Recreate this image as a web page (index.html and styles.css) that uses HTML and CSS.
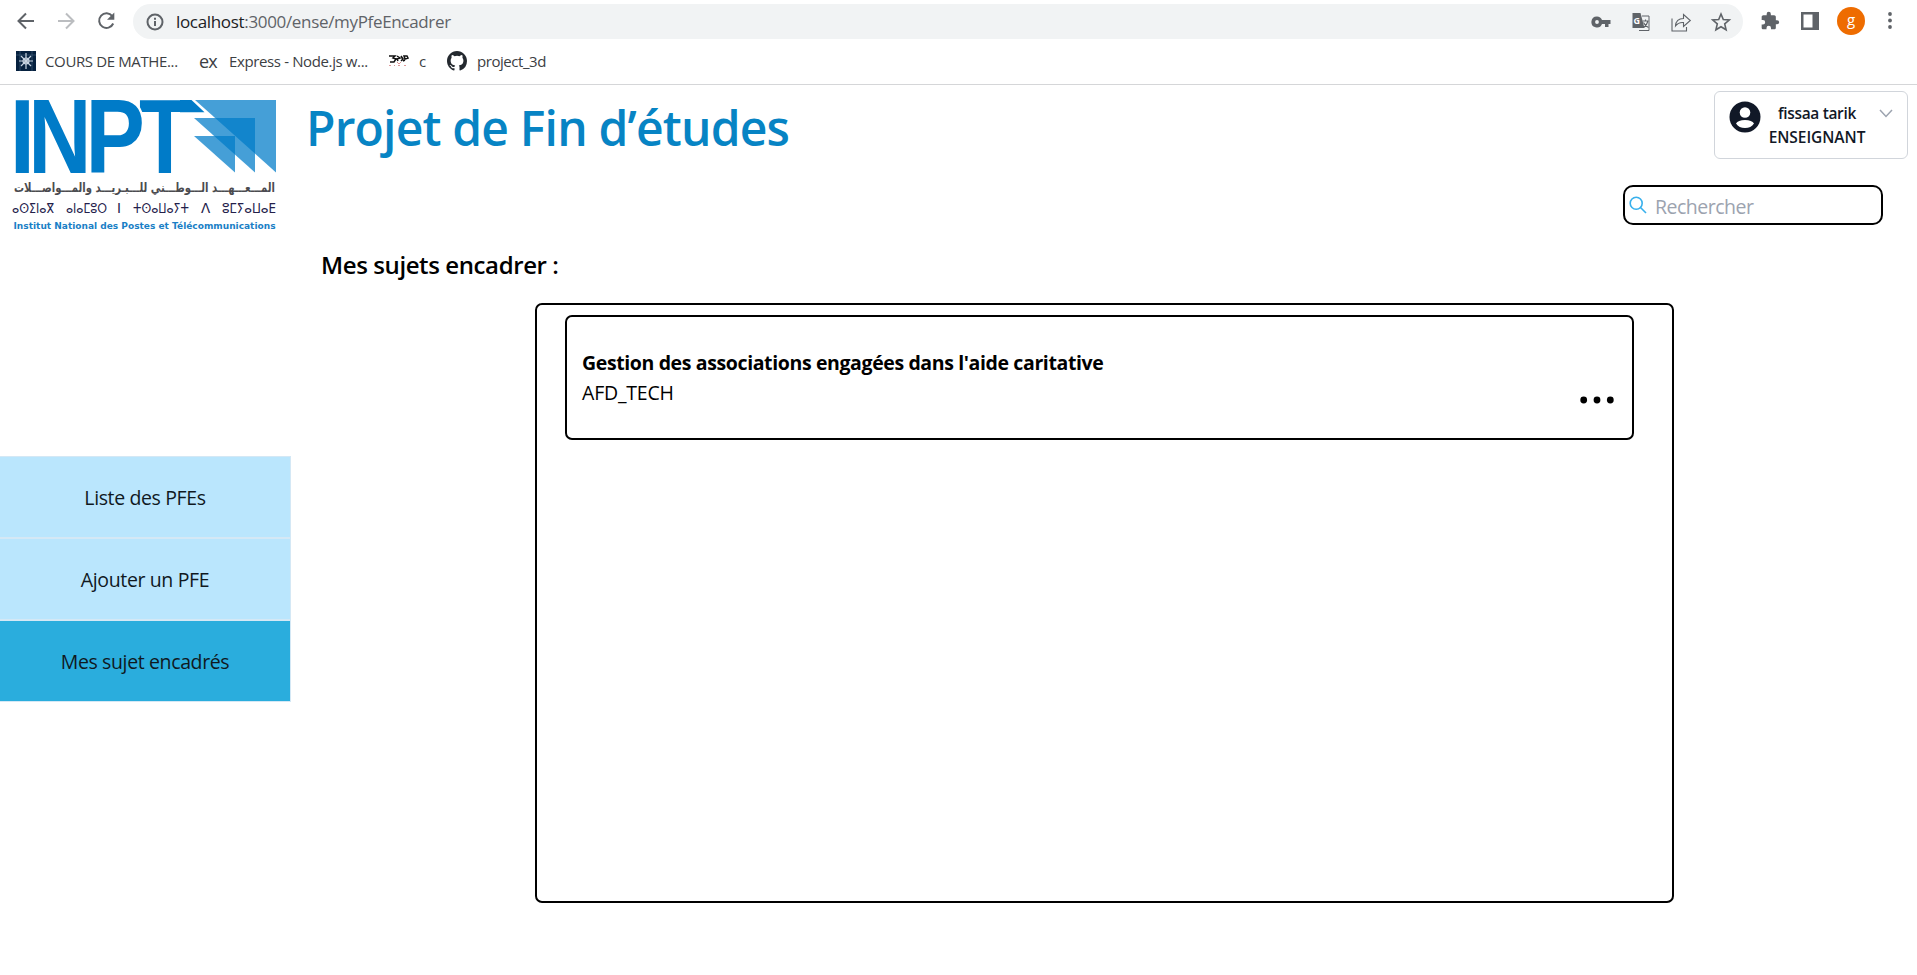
FILE: index.html
```html
<!DOCTYPE html>
<html lang="fr">
<head>
<meta charset="utf-8">
<title>Projet de Fin d’études</title>
<link rel="stylesheet" href="styles.css">
</head>
<body>
<header class="browser">
  <div class="toolbar">
    <div class="nav">
      <svg width="20" height="20" viewBox="0 0 20 20"><path d="M18 10H3M10 2.500L2.500 10l7.500 7.500"/></svg>
      <svg class="dim" width="20" height="20" viewBox="0 0 20 20"><path d="M2 10h15M10 2.500L17.500 10 10 17.500"/></svg>
      <svg width="20" height="20" viewBox="0 0 20 20"><path d="M16.300 5.200A7.300 7.300 0 1 0 17.200 12.500"/><path class="solid" d="M18.300 1.500v7.300H11z"/></svg>
    </div>
    <div class="address">
      <svg class="info" width="18" height="18" viewBox="0 0 18 18"><circle cx="9" cy="9" r="7.500"/><path d="M9 8v5M9 4.700v2"/></svg>
      <span class="url"><span class="host">localhost</span>:3000/ense/myPfeEncadrer</span>
      <div class="actions">
        <svg width="20" height="20" viewBox="0 0 20 20"><path class="solid" fill-rule="evenodd" d="M6 4.500a5.500 5.500 0 1 0 5 7.500h3v3h3.500v-3H19.500V8H11A5.500 5.500 0 0 0 6 4.500zm0 3.600a1.900 1.900 0 1 1 0 3.800 1.900 1.900 0 0 1 0-3.800z"/></svg>
        <svg width="20" height="20" viewBox="0 0 20 20"><path d="M11 4h7v14.500H8" stroke-width="1"/><path class="solid" d="M1.500 1h8l4 15h-12z"/><text class="gt" x="2.500" y="11.500">G</text><path class="thin" d="M11.500 9h6M14.500 7.500V9M17 9q-1 4-4.500 6.500M12.500 10.500q1.500 3.500 5 5"/></svg>
        <svg width="20" height="20" viewBox="0 0 20 20"><path class="thin" d="M1 6.500V19h14.500v-4M4.500 14Q5 6.500 12.500 6.500V2.500L19.300 8.500l-6.800 6V10.500Q7.500 10 4.500 14z"/></svg>
        <svg width="20" height="20" viewBox="0 0 20 20"><path class="star" d="M10 2l2.300 5.500 6 .500-4.600 3.900 1.400 5.900L10 14.700l-5.100 3.100 1.400-5.900L1.700 8l6-.5z"/></svg>
      </div>
    </div>
    <div class="tools">
      <svg width="20" height="20" viewBox="0 0 24 24"><path class="solid" d="M20.500 11H19V7c0-1.100-.9-2-2-2h-4V3.500a2.500 2.500 0 0 0-5 0V5H4c-1.100 0-2 .9-2 2v3.800h1.500a2.700 2.700 0 0 1 0 5.400H2V20c0 1.100.9 2 2 2h3.800v-1.500a2.700 2.700 0 0 1 5.400 0V22H17c1.100 0 2-.9 2-2v-4h1.500a2.500 2.500 0 0 0 0-5z"/></svg>
      <svg width="18" height="18" viewBox="0 0 18 18"><path class="solid" fill-rule="evenodd" d="M0 0h18v18H0zM2.500 2.500v13h9v-13z"/></svg>
      <span class="avatar">g</span>
      <svg width="6" height="18" viewBox="0 0 6 18"><g class="solid"><circle cx="3" cy="2" r="1.900"/><circle cx="3" cy="8.500" r="1.900"/><circle cx="3" cy="15" r="1.900"/></g></svg>
    </div>
  </div>
  <nav class="bookmarks">
    <a class="bm1"><svg width="20" height="20" viewBox="0 0 20 20"><path fill="#06213f" stroke="none" d="M0 0h20v20H0z"/><path class="grid" d="M0 4h20M4 0v20M16 0v20"/><path class="flake" d="M10 2v16M3 10h14M5 5l10 10M15 5L5 15"/><circle class="flake" cx="10" cy="10" r="3"/></svg><span>COURS DE MATHE...</span></a>
    <a class="bm2"><span class="ex">ex</span><span>Express - Node.js w...</span></a>
    <a class="bm3"><svg class="cow" width="20" height="14" viewBox="0 0 20 14"><path class="ink" d="M0 2h6L4 4l3 1-2 3H1M8 2l3 2-3 1 1 2M12 2l2 3-2 2M15 2h3l1 2-3 1zM14 7l2-1"/><path class="pink" d="M8 8l2 2 2-2M0 11.500h2M5 11.500h1M9 11.500h2M15 11.500h2"/></svg><span>c</span></a>
    <a class="bm4"><svg width="20" height="20" viewBox="0 0 16 16"><path fill="#24292f" stroke="none" d="M8 0C3.580 0 0 3.580 0 8c0 3.540 2.290 6.530 5.470 7.590.4.070.55-.17.55-.38 0-.19-.01-.82-.01-1.490-2.010.37-2.530-.49-2.690-.94-.09-.23-.48-.94-.82-1.130-.28-.15-.68-.52-.01-.53.63-.01 1.080.58 1.230.82.72 1.210 1.870.87 2.330.66.07-.52.28-.87.51-1.070-1.780-.2-3.640-.89-3.640-3.950 0-.87.31-1.590.82-2.150-.08-.2-.36-1.020.08-2.120 0 0 .67-.21 2.200.82a7.600 7.600 0 0 1 4 0c1.530-1.040 2.200-.82 2.200-.82.44 1.100.16 1.920.08 2.120.51.56.82 1.270.82 2.150 0 3.070-1.870 3.750-3.650 3.950.29.25.54.73.54 1.480 0 1.070-.01 1.930-.01 2.200 0 .21.15.46.55.38A8 8 0 0 0 16 8c0-4.420-3.580-8-8-8z"/></svg><span>project_3d</span></a>
  </nav>
</header>
<div class="app">
  <aside class="side">
    <svg class="logo" width="290" height="160" viewBox="0 85 290 160">
      <g class="letters">
        <text transform="translate(139.100 173) scale(.8 1)">T</text>
        <path d="M180 100h11.500l13 12.300H180z"/>
        <text class="cut" transform="translate(85.500 173) scale(.84 1)">P</text>
        <text transform="translate(28.300 173) scale(.825 1)">N</text>
        <text transform="translate(9.800 173) scale(.855 1)">I</text>
      </g>
      <g class="tri"><path d="M195 100h81v72.500z"/><path d="M194 118h61v54.500z"/><path d="M194 136h41v36.500z"/></g>
      <text class="arabic" x="14" y="192" textLength="261" lengthAdjust="spacingAndGlyphs">المـــعـــهـــد الـــوطـــني للـــبـريـــد والمـــواصـــلات</text>
      <g class="tifinagh">
        <text x="12" y="213" textLength="42" lengthAdjust="spacingAndGlyphs">ⴰⵙⵉⵏⴰⴳ</text>
        <text x="66" y="213" textLength="41" lengthAdjust="spacingAndGlyphs">ⴰⵏⴰⵎⵓⵔ</text>
        <text x="117" y="213">ⵏ</text>
        <text x="133" y="213" textLength="56" lengthAdjust="spacingAndGlyphs">ⵜⵙⴰⵡⴰⵢⵜ</text>
        <text x="201" y="213">ⴷ</text>
        <text x="222" y="213" textLength="54" lengthAdjust="spacingAndGlyphs">ⵓⵎⵢⴰⵡⴰⴹ</text>
      </g>
      <text class="inst" x="13.500" y="229" textLength="262" lengthAdjust="spacingAndGlyphs">Institut National des Postes et Télécommunications</text>
    </svg>
    <nav class="menu">
      <a>Liste des PFEs</a>
      <a>Ajouter un PFE</a>
      <a class="active">Mes sujet encadrés</a>
    </nav>
  </aside>
  <main class="main">
    <div class="top">
      <h1>Projet de Fin d’études</h1>
      <div class="user">
        <svg width="32" height="32" viewBox="0 0 32 32"><circle cx="16" cy="16" r="15.500" fill="#111827"/><circle cx="16" cy="11.500" r="5.300" fill="#fff"/><path fill="#fff" d="M7 22.500Q9 19 16 19t9 3.500Q22 27 16 27T7 22.500z"/></svg>
        <div class="who"><span>fissaa tarik</span><span class="role">ENSEIGNANT</span></div>
        <svg class="chev" width="14" height="9" viewBox="0 0 14 9"><path d="M1 1l6 6.500L13 1"/></svg>
      </div>
    </div>
    <label class="search"><svg width="18" height="18" viewBox="0 0 18 18"><circle cx="7.200" cy="7.200" r="6"/><path d="M11.500 11.500l5.500 5.500"/></svg><span>Rechercher</span></label>
    <h2>Mes sujets encadrer :</h2>
    <section class="panel">
      <article class="card">
        <div><h3>Gestion des associations engagées dans l'aide caritative</h3><p>AFD_TECH</p></div>
        <svg class="dots" width="34" height="8" viewBox="0 0 34 8"><circle cx="3.700" cy="4" r="3.400"/><circle cx="17" cy="4" r="3.400"/><circle cx="30.300" cy="4" r="3.400"/></svg>
      </article>
    </section>
  </main>
</div>
</body>
</html>
```
FILE: styles.css
```css
* { box-sizing: border-box; }
body { margin: 0; height: 975px; overflow: hidden; background: #fff; color: #000; font-family: "Open Sans", "Noto Sans", sans-serif; white-space: nowrap; }
h1, h2, h3, p { margin: 0; }
svg { display: block; flex: none; overflow: visible; }
.browser { height: 85px; border-bottom: 1px solid #d5d6d8; }
.browser svg { fill: none; stroke: #5f6368; stroke-width: 2; }
.browser .solid { fill: #5f6368; stroke: none; }
.browser .thin { stroke-width: 1.1; }
.browser .star { stroke-width: 1.6; }
.toolbar { display: flex; height: 42px; padding-top: 4px; }
.nav { display: flex; align-items: center; gap: 20px; width: 133px; padding-left: 16px; height: 34px; }
.nav .dim { stroke: #bbbdc0; }
.address { display: flex; align-items: center; width: 1610px; height: 35px; border-radius: 18px; background: #f1f3f4; padding: 0 12px 0 13px; }
.url { margin-left: 12px; font-size: 17px; letter-spacing: -.33px; color: #5f6368; }
.host { color: #202124; }
.actions { display: flex; gap: 20px; margin-left: auto; }
.gt { font: bold 9px "Open Sans", sans-serif; fill: #fff; stroke: none; }
.tools { display: flex; align-items: center; height: 34px; padding-left: 17px; }
.tools svg:nth-child(2) { margin: 0 18px 0 21px; }
.avatar { width: 28px; height: 28px; border-radius: 50%; background: #ee6c00; color: #fff; font-size: 15px; line-height: 25px; text-align: center; margin-right: 22px; }
.bookmarks { display: flex; align-items: center; height: 38px; padding-left: 16px; font-size: 15px; letter-spacing: -.37px; color: #3c4043; }
.bookmarks a { display: flex; align-items: center; gap: 10px; }
.bookmarks .grid { stroke: #52708f; stroke-width: .5; }
.bookmarks .flake { stroke: #c9d5e2; stroke-width: 1.2; }
.bookmarks .ink { stroke: #111; stroke-width: 1.5; }
.bookmarks .pink { stroke: #d99; stroke-width: 1; }
.bookmarks .bm1 { width: 183px; gap: 9px; }
.bm2 { width: 190px; }
.bm3 { width: 58px; }
.bm4 { letter-spacing: -.45px; }
.ex { font-size: 18px; letter-spacing: -.9px; width: 20px; line-height: 20px; }
.app { display: flex; height: 890px; }
.side { width: 291px; }
.letters { font: bold 106px "Liberation Sans", Arial, sans-serif; fill: #007bc8; }
.cut { stroke: #fff; stroke-width: 5px; paint-order: stroke; }
.tri { fill: #007bc8; fill-opacity: .73; }
.arabic { font: bold 13px "DejaVu Sans", sans-serif; fill: #4b4b4f; direction: ltr; }
.tifinagh { font: 13.5px "DejaVu Sans", sans-serif; fill: #23204a; }
.inst { font: bold 9.5px "DejaVu Sans", sans-serif; fill: #1a7fc6; }
.menu { margin-top: 211px; border: 1px solid #d4e8f5; border-left: 0; background: #d4e8f5; display: grid; gap: 2px; grid-template-rows: 80px 80px 80px; }
.menu a { display: flex; align-items: center; justify-content: center; background: #bae6fd; font-size: 19.5px; letter-spacing: -.37px; color: #10191f; }
.menu .active { background: #2aaddd; }
.main { flex: 1; display: flex; flex-direction: column; }
.top { display: flex; justify-content: space-between; align-items: flex-start; height: 100px; padding: 6px 9px 0 14px; }
h1 { padding-left: 1px; font-size: 48px; line-height: 73px; letter-spacing: -.82px; font-weight: 600; color: #0784c4; }
.user { display: flex; width: 194px; height: 68px; border: 1px solid #d1d5db; border-radius: 6px; padding: 9px 14px; color: #111827; }
.who { width: 98px; margin-left: 7px; display: flex; flex-direction: column; align-items: center; font-size: 15.5px; font-weight: 600; letter-spacing: -.35px; line-height: 24px; }
.role { letter-spacing: -.05px; }
.chev { margin: 8px 0 0 13px; fill: none; stroke: #9ca3af; stroke-width: 1.5; }
.search { align-self: flex-end; display: flex; align-items: center; width: 260px; height: 40px; margin-right: 34px; border: 2px solid #000; border-radius: 10px; padding-left: 4px; gap: 8px; font-size: 19.5px; letter-spacing: -.5px; color: #9ca3af; }
.search span { padding-top: 2px; }
.search svg { fill: none; stroke: #38b0ec; stroke-width: 1.6; }
h2 { margin: 20px 0 0 30px; font-size: 24px; line-height: 39px; letter-spacing: -.4px; font-weight: 600; }
.panel { width: 1139px; height: 600px; margin: 19px 0 0 244px; border: 2px solid #000; border-radius: 7px; padding: 10px 38px 0 28px; }
.card { display: flex; justify-content: space-between; height: 125px; border: 2px solid #000; border-radius: 7px; padding: 31px 18px 0 15px; }
h3 { font-size: 19.5px; line-height: 30px; letter-spacing: -.38px; font-weight: 700; }
p { font-size: 19.5px; line-height: 30px; letter-spacing: -.2px; }
.dots { margin-top: 48px; }
```
